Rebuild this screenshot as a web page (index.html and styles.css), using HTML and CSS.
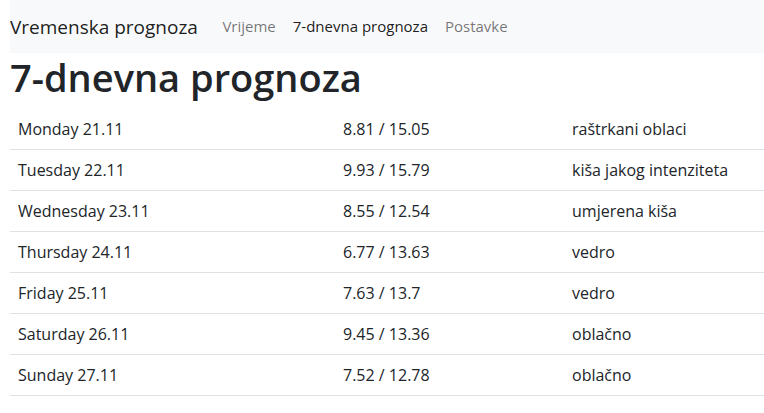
FILE: index.html
```html
<!DOCTYPE html>
<html lang="hr">
<head>
<meta charset="utf-8">
<title>7-dnevna prognoza</title>
<link rel="stylesheet" href="styles.css">
</head>
<body>
<div class="page">
  <nav class="navbar">
    <span class="brand">Vremenska prognoza</span>
    <ul class="nav">
      <li><a class="nav-link">Vrijeme</a></li>
      <li><a class="nav-link active">7-dnevna prognoza</a></li>
      <li><a class="nav-link">Postavke</a></li>
    </ul>
  </nav>
  <h1 class="title">7-dnevna prognoza</h1>
  <table class="forecast">
    <tbody>
      <tr><td class="c-day">Monday 21.11</td><td class="c-temp">8.81 / 15.05</td><td class="c-desc">raštrkani oblaci</td></tr>
      <tr><td class="c-day">Tuesday 22.11</td><td class="c-temp">9.93 / 15.79</td><td class="c-desc">kiša jakog intenziteta</td></tr>
      <tr><td class="c-day">Wednesday 23.11</td><td class="c-temp">8.55 / 12.54</td><td class="c-desc">umjerena kiša</td></tr>
      <tr><td class="c-day">Thursday 24.11</td><td class="c-temp">6.77 / 13.63</td><td class="c-desc">vedro</td></tr>
      <tr><td class="c-day">Friday 25.11</td><td class="c-temp">7.63 / 13.7</td><td class="c-desc">vedro</td></tr>
      <tr><td class="c-day">Saturday 26.11</td><td class="c-temp">9.45 / 13.36</td><td class="c-desc">oblačno</td></tr>
      <tr><td class="c-day">Sunday 27.11</td><td class="c-temp">7.52 / 12.78</td><td class="c-desc">oblačno</td></tr>
    </tbody>
  </table>
</div>
</body>
</html>
```

FILE: styles.css
```css
html, body {
  margin: 0;
  padding: 0;
  background: #fff;
}
body {
  font-family: "Open Sans", "Noto Sans", sans-serif;
  font-size: 16px;
  line-height: 1.5;
  color: #212529;
}
.page {
  padding-left: 10px;
}
.navbar {
  display: flex;
  align-items: center;
  background: #f8f9fa;
  height: 53px;
  box-sizing: border-box;
}
.brand {
  font-size: 19px;
  color: rgba(0, 0, 0, 0.9);
  margin-right: 16px;
  line-height: 30px;
}
.nav {
  display: flex;
  list-style: none;
  margin: 0;
  padding: 0;
}
.nav-link {
  display: block;
  padding: 8px 8.5px;
  font-size: 15px;
  color: rgba(0, 0, 0, 0.55);
  text-decoration: none;
}
.nav-link.active {
  color: rgba(0, 0, 0, 0.9);
}
.title {
  margin: 0 0 8px;
  font-size: 38px;
  font-weight: 600;
  line-height: 48px;
}
.forecast {
  width: 100%;
  border-collapse: collapse;
}
.forecast td {
  padding: 8px;
  line-height: 24px;
  border-bottom: 1px solid #dee2e6;
  vertical-align: top;
}
.c-day { width: 309px; }
.c-temp { width: 213px; }
```
